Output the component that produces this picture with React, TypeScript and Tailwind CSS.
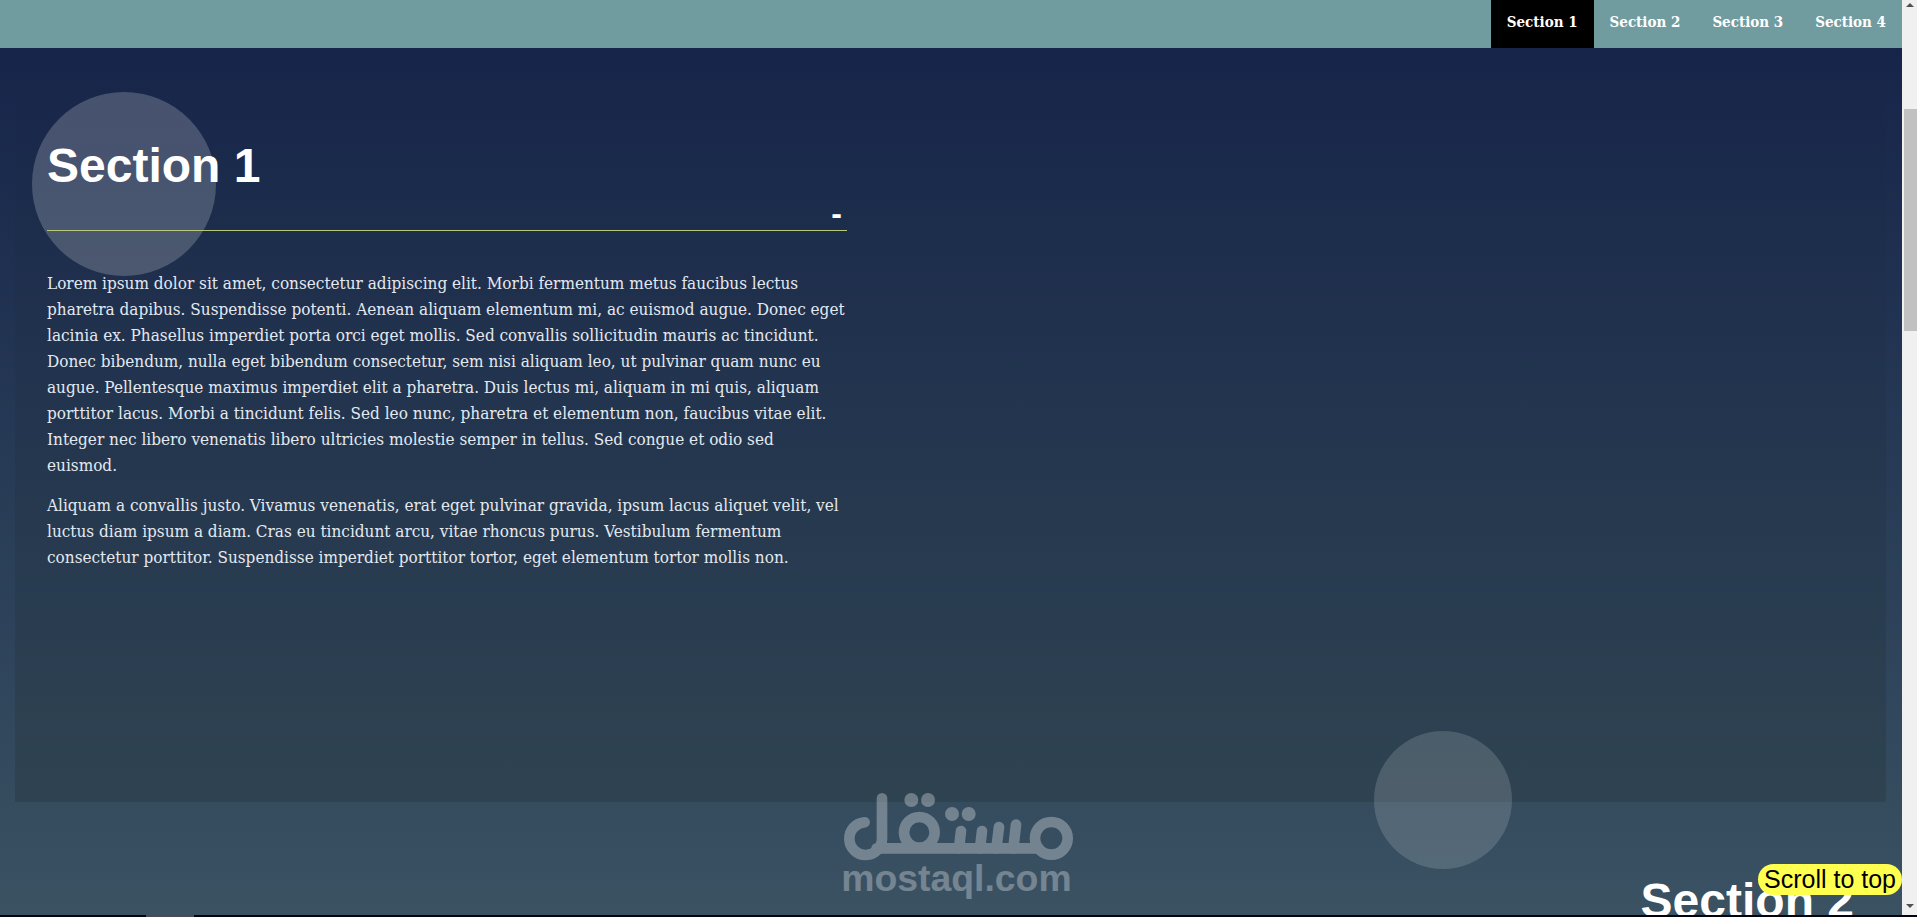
import { useState } from "react";
import { clsx } from "clsx";

const sections = ["Section 1", "Section 2", "Section 3", "Section 4"];

function Navbar({ active, onSelect }: { active: string; onSelect: (name: string) => void }) {
  return (
    <header className="bg-[#709c9f]">
      <nav>
        <ul className="flex justify-end">
          {sections.map((name) => (
            <li key={name}>
              <a
                href={`#${name.toLowerCase().replace(" ", "-")}`}
                onClick={() => onSelect(name)}
                className={clsx(
                  "block h-12 px-4 pt-[10px] text-[15px] leading-6 font-bold text-white",
                  active === name && "bg-black"
                )}
              >
                {name}
              </a>
            </li>
          ))}
        </ul>
      </nav>
    </header>
  );
}

function Watermark() {
  return (
    <svg viewBox="60 66 708 336" className="w-[236px] opacity-30" fill="white" stroke="white">
      <g fill="none" strokeWidth="32" strokeLinecap="round">
        <path d="M134 157 A49 49 0 1 0 186 206 V85" />
        <path d="M170 235 H655" />
        <circle cx="298" cy="187" r="46" />
        <circle cx="694" cy="205" r="49" />
        <path d="M423 183 L417 235 M486 183 L480 235 M537 171 L529 235 M588 164 L580 235" />
      </g>
      <g stroke="none">
        <circle cx="274" cy="90" r="21" />
        <circle cx="324" cy="90" r="21" />
        <circle cx="396" cy="132" r="21" />
        <circle cx="446" cy="132" r="21" />
        <text x="64" y="362" fontSize="112" fontWeight="700" fontFamily="Liberation Sans, sans-serif">
          mostaql.com
        </text>
      </g>
    </svg>
  );
}

function Scrollbar() {
  return (
    <div className="flex w-[15px] shrink-0 flex-col bg-[#f0f0f0] pl-[2px]">
      <svg viewBox="0 0 13 10" className="h-[10px] w-[13px]" fill="#505050">
        <path d="M6 3 L10 7 H2 Z" />
      </svg>
      <div className="mt-[99px] h-[222px] bg-[#c1c1c1]" />
      <svg viewBox="0 0 13 10" className="mt-auto mb-1 h-[10px] w-[13px]" fill="#505050">
        <path d="M2 3 H10 L6 7 Z" />
      </svg>
    </div>
  );
}

export default function App() {
  const [active, setActive] = useState("Section 1");
  const [open, setOpen] = useState(true);

  return (
    <div className="flex h-screen flex-col bg-[#02050f] font-['DejaVu_Serif_Condensed','DejaVu_Serif',serif]">
      <div className="flex min-h-0 flex-1">
        <main className="relative min-w-0 flex-1 overflow-hidden bg-linear-to-b from-[#152248] to-[#3a5262]">
          <Navbar active={active} onSelect={setActive} />

          <section
            id="section-1"
            className="relative mr-4 ml-[15px] min-h-[754px] bg-linear-to-b from-black/0 to-[#10180f]/17 px-8 pt-[88px]"
          >
            <div className="absolute top-[44px] left-[17px] size-[184px] rounded-full bg-white/20" />
            <div className="absolute right-[20%] -bottom-[67px] size-[138px] rounded-full bg-white/15" />

            <div className="relative max-w-[800px]">
              <h2 className="font-['Liberation_Sans',sans-serif] text-5xl leading-[60px] font-bold text-white">
                Section 1
              </h2>
              <div className="flex justify-end border-b border-[#b9c77c] pr-[5px]">
                <button
                  type="button"
                  aria-label="Toggle section"
                  onClick={() => setOpen(!open)}
                  className="font-['Liberation_Sans',sans-serif] text-[32px] leading-[34px] font-bold text-white"
                >
                  {open ? "-" : "+"}
                </button>
              </div>
              {open && (
                <div className="mt-[39px] space-y-[14px] text-[17px] leading-[26px] text-[#e4e9f0]">
                  <p>
                    Lorem ipsum dolor sit amet, consectetur adipiscing elit. Morbi fermentum metus faucibus lectus
                    pharetra dapibus. Suspendisse potenti. Aenean aliquam elementum mi, ac euismod augue. Donec eget
                    lacinia ex. Phasellus imperdiet porta orci eget mollis. Sed convallis sollicitudin mauris ac
                    tincidunt. Donec bibendum, nulla eget bibendum consectetur, sem nisi aliquam leo, ut pulvinar quam
                    nunc eu augue. Pellentesque maximus imperdiet elit a pharetra. Duis lectus mi, aliquam in mi quis,
                    aliquam porttitor lacus. Morbi a tincidunt felis. Sed leo nunc, pharetra et elementum non, faucibus
                    vitae elit. Integer nec libero venenatis libero ultricies molestie semper in tellus. Sed congue et
                    odio sed euismod.
                  </p>
                  <p>
                    Aliquam a convallis justo. Vivamus venenatis, erat eget pulvinar gravida, ipsum lacus aliquet velit,
                    vel luctus diam ipsum a diam. Cras eu tincidunt arcu, vitae rhoncus purus. Vestibulum fermentum
                    consectetur porttitor. Suspendisse imperdiet porttitor tortor, eget elementum tortor mollis non.
                  </p>
                </div>
              )}
            </div>
          </section>

          <section id="section-2" className="mr-4 ml-[15px] px-8 pt-[69px]">
            <h2 className="text-right font-['Liberation_Sans',sans-serif] text-5xl leading-[60px] font-bold text-white">
              Section 2
            </h2>
          </section>

          <div className="pointer-events-none absolute inset-x-0 bottom-[11px] flex justify-center pl-[13px]">
            <Watermark />
          </div>
          <button
            type="button"
            className="absolute right-0 bottom-5 rounded-full bg-[#ffff50] px-[6px] font-['Liberation_Sans',sans-serif] text-[25px] leading-[31px] text-black"
          >
            Scroll to top
          </button>
        </main>
        <Scrollbar />
      </div>
      <div className="h-[2px] shrink-0 pl-[146px]">
        <div className="h-full w-12 bg-[#4b4a58]" />
      </div>
    </div>
  );
}
